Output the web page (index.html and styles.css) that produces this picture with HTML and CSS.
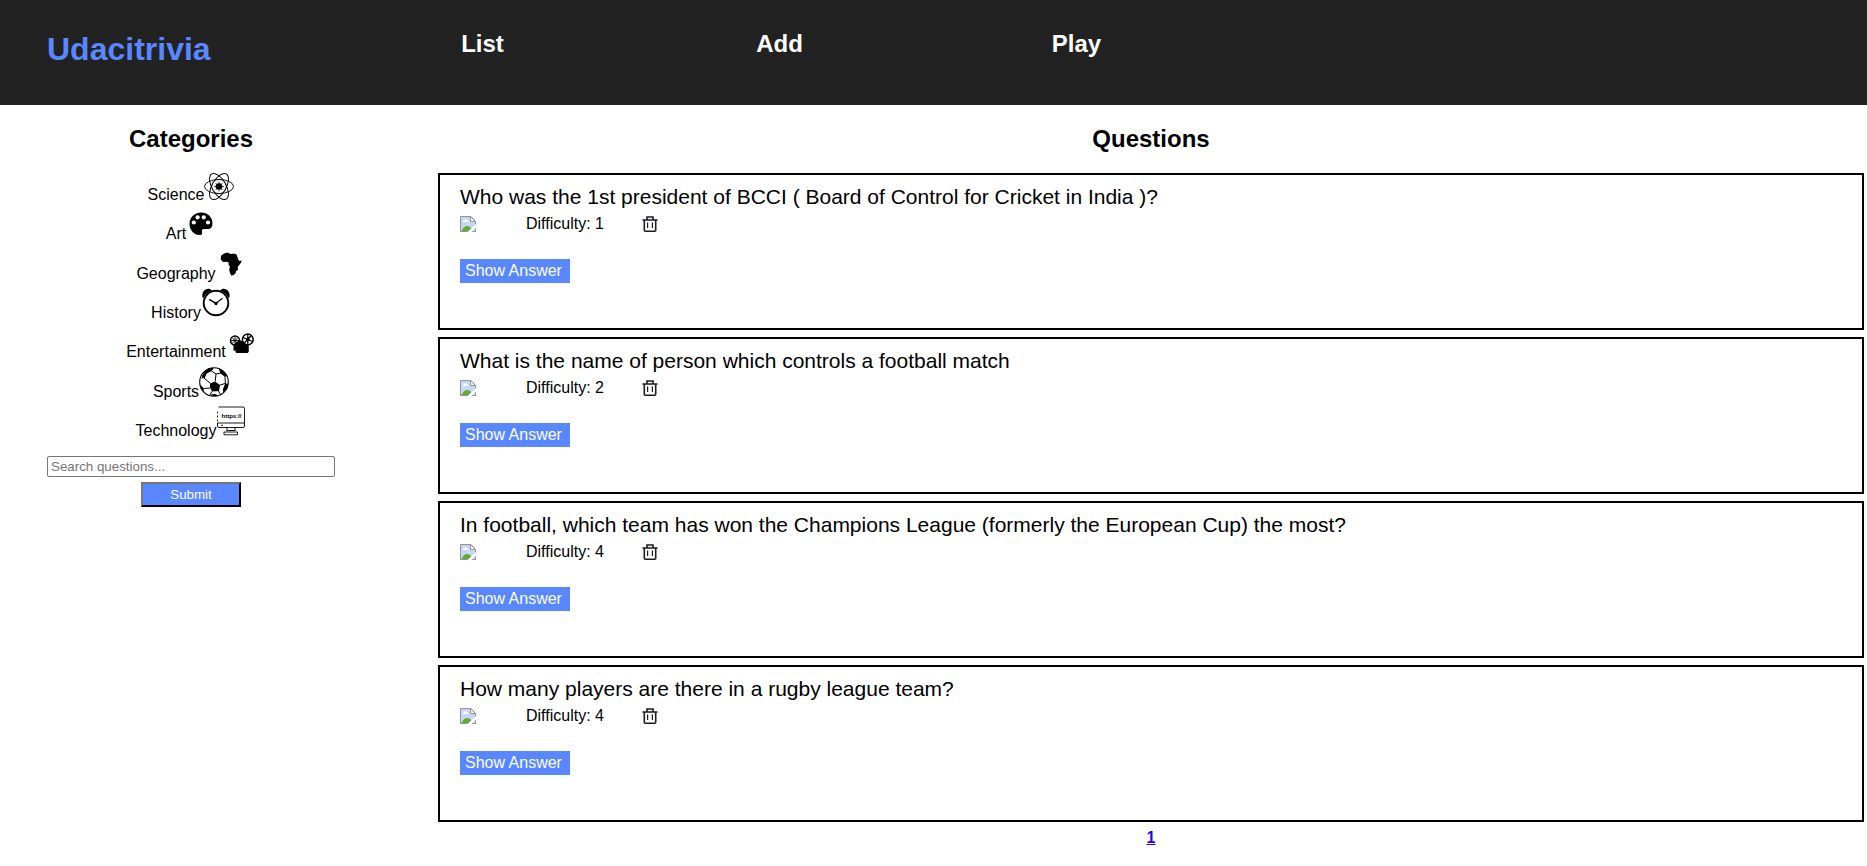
FILE: index.html
```
<!DOCTYPE html>
<html lang="en">
<head>
<meta charset="utf-8">
<title>Udacitrivia</title>
<link rel="stylesheet" href="styles.css">
</head>
<body>
<svg class="sprite" aria-hidden="true">
  <symbol id="broken" viewBox="0 0 16 16">
    <path d="M0 0h11l5 5v11H0z" fill="#fff"/>
    <path d="M1 1h9v5h5v9H1z" fill="#c8d6f8"/>
    <path d="M2.500 6a1.500 1.500 0 0 1 1.500-1.700 2 2 0 0 1 3.500 0A1 1 0 0 1 8 6z" fill="#fff"/>
    <path d="M1.500 15c1.500-3.500 3.500-5 5.500-5s3.500 1 4.500 2.500L9 15z" fill="#62ad35"/>
    <path d="M.5 16V.5h10.300l4.700 4.700V16M0 15.500h16" fill="none" stroke="#949494"/>
    <path d="M10.500.5v5h5z" fill="#fff" stroke="#949494"/>
    <path d="M16 8v3.500L11.500 16H7.500z" fill="#fff"/>
  </symbol>
  <symbol id="trash" viewBox="0 0 16 16">
    <path d="M.5 4h15M5 4V1h6v3M2.300 4v10.200q0 1 1 1h9.400q1 0 1-1V4" fill="none" stroke="#1c1c22" stroke-width="1.600"/>
    <path d="M5.600 6.500v5.500M10.400 6.500v5.500" stroke="#1c1c22" stroke-width="1.200"/>
  </symbol>
</svg>
<header class="header">
  <h1 class="logo">Udacitrivia</h1>
  <h2 class="nav-item">List</h2>
  <h2 class="nav-item">Add</h2>
  <h2 class="nav-item">Play</h2>
</header>
<main class="layout">
  <aside class="sidebar">
    <h2 class="title">Categories</h2>
    <ul class="categories">
      <li class="category">Science<svg class="category-icon" viewBox="0 0 30 30" fill="none" stroke="#000" stroke-width=".9"><ellipse cx="15" cy="16.500" rx="14.500" ry="7"/><ellipse cx="15" cy="16.500" rx="14.500" ry="7" transform="rotate(60 15 16.500)"/><ellipse cx="15" cy="16.500" rx="14.500" ry="7" transform="rotate(120 15 16.500)"/><circle cx="15" cy="16.500" r="7.300" stroke-width=".5"/><circle cx="15" cy="16.500" r="3.300" fill="#000" stroke="none"/><path d="M15 11.500v10M10 16.500h10M11.500 13l7 7M18.500 13l-7 7" stroke-width=".7"/></svg></li>
      <li class="category">Art<svg class="category-icon" viewBox="0 0 30 30"><path d="M15 3.500C8.500 3.500 3.500 8.500 3.500 15S8.500 26 13.500 26q3 0 2.600-2.600c-.7-2.600 0-3.400 2.400-3.400h3.500c3 0 4.500-2 4.500-5.500C26.500 8 21.500 3.500 15 3.500z"/><g fill="#fff"><circle cx="7.800" cy="13.500" r="2.100"/><circle cx="11.600" cy="8.300" r="2.100"/><circle cx="17.800" cy="8.300" r="2.100"/><circle cx="22" cy="13.500" r="2.100"/></g></svg></li>
      <li class="category">Geography<svg class="category-icon" viewBox="0 0 30 30"><path d="M8 4.500l4-1 1 1 3 .6 1-.5 3.500.6 1.600 5 1.400 1.700 2.200-.5-.7 2.300-3.200 4 .2 3-2 1.600-.4 2-2.500 2-2 .2-1.400-3.500-.5-3 .8-2-1.500-2.500.2-2-1.700-.8-4 .4-2.300-2.700.3-3.600z"/></svg></li>
      <li class="category">History<svg class="category-icon" viewBox="0 0 30 30"><path d="M1.500 9.500C.5 4 4 0 8.500.800l2.500 1.700C6 4.500 4 7 2.500 10zM28.500 9.500c1-5.500-2.500-9.500-7-8.700L19 2.500c5 2 7 4.500 8.500 7.500z"/><circle cx="15" cy="15" r="12.300" fill="#fff" stroke="#000" stroke-width="1.900"/><path d="M15 15.300l6.500-5" stroke="#000" stroke-width="1.100"/><path d="M15 15.300L8.200 11.300" stroke="#000" stroke-width="1.500"/><circle cx="15" cy="15.500" r="1.700"/></svg></li>
      <li class="category">Entertainment<svg class="category-icon" viewBox="0 0 30 30"><path d="M9.500 14h13v10.500q0 1.500-1.500 1.500H11q-1.500 0-1.500-1.500zM9.500 18v5L7.500 24v-7z"/><circle cx="9" cy="13.500" r="4.500" fill="#fff" stroke="#000" stroke-width="1.500"/><path d="M9 9v9M4.500 13.500h9M6 10.500l6 6M12 10.500l-6 6" stroke="#000" stroke-width=".9"/><circle cx="21.800" cy="12.500" r="5.400" fill="#fff" stroke="#000" stroke-width="1.500"/><path d="M21.800 7.500v10M17 10.500l9.500 4M18.300 16l7-7.500" stroke="#000" stroke-width="1.300"/><circle cx="21.800" cy="12.500" r="1.800"/><path d="M9 16l5-3 5 4 3.500 2v6H10z"/></svg></li>
      <li class="category">Sports<svg class="category-icon" viewBox="0 0 30 30"><circle cx="15" cy="15" r="14.300" fill="#fff" stroke="#000" stroke-width="1.100"/><path d="M11 16.500l5-2 5 3.500-1 6-7 .5-2-4zM10 1.200l5-.4-2.300 3.200-5 2.500-2 4.500-3.400.500C3.500 7 6 3 10 1.200zM19.500 1.200l4.500 2.200 4 5.600-2 1-4.500-3.500zM29.200 16.500l-1 5-4 4.500-.2-4 2-5zM.7 17l3.800 4 .5 4.500C2.300 23.500.9 21 .7 17zM10.500 27.500l6-.5 2.500 1.500q-4.500 1.500-8.500-1z"/><path d="M12.500 4l4.500 3 5-1M17 7l-.8 7.500M5 11l6.500 5.500M26 10l.5 7.500M21 18l5-1.500M19.500 24l2 3.500M11 21l-6.500.5M13 24.500l-2 3" fill="none" stroke="#000" stroke-width="1"/></svg></li>
      <li class="category">Technology<svg class="category-icon" viewBox="0 0 30 30" fill="none" stroke="#000" stroke-width=".9"><path d="M4 1h23q1.500 0 1.500 1.500v17.500q0 1.500-1.500 1.500H3q-1.500 0-1.500-1.500v-3M1.500 5.500v2M1.500 9.500v2M1.500 13.500v2M1.500 17h27M2.500 1H4M5 19.300h2"/><path d="M11 21.500v3M19 21.500v3M10.500 24.500h9M8 26h13.500v2.800H8z"/><text class="screen-text" x="15.500" y="11.500" text-anchor="middle" fill="#000" stroke="none">https://</text></svg></li>
    </ul>
    <form class="search">
      <input class="search-input" type="text" placeholder="Search questions..." aria-label="Search questions">
      <input class="search-submit" type="button" value="Submit">
    </form>
  </aside>
  <section class="questions">
    <h2 class="title">Questions</h2>
    <article class="card">
      <div class="question">Who was the 1st president of BCCI ( Board of Control for Cricket in India )?</div>
      <div class="status"><svg class="icon"><use href="#broken"/></svg><span class="difficulty">Difficulty: 1</span><button class="delete" type="button" aria-label="Delete"><svg class="icon"><use href="#trash"/></svg></button></div>
      <button class="show-answer" type="button">Show Answer</button>
    </article>
    <article class="card">
      <div class="question">What is the name of person which controls a football match</div>
      <div class="status"><svg class="icon"><use href="#broken"/></svg><span class="difficulty">Difficulty: 2</span><button class="delete" type="button" aria-label="Delete"><svg class="icon"><use href="#trash"/></svg></button></div>
      <button class="show-answer" type="button">Show Answer</button>
    </article>
    <article class="card">
      <div class="question">In football, which team has won the Champions League (formerly the European Cup) the most?</div>
      <div class="status"><svg class="icon"><use href="#broken"/></svg><span class="difficulty">Difficulty: 4</span><button class="delete" type="button" aria-label="Delete"><svg class="icon"><use href="#trash"/></svg></button></div>
      <button class="show-answer" type="button">Show Answer</button>
    </article>
    <article class="card">
      <div class="question">How many players are there in a rugby league team?</div>
      <div class="status"><svg class="icon"><use href="#broken"/></svg><span class="difficulty">Difficulty: 4</span><button class="delete" type="button" aria-label="Delete"><svg class="icon"><use href="#trash"/></svg></button></div>
      <button class="show-answer" type="button">Show Answer</button>
    </article>
    <nav class="pagination"><a class="page" href="#">1</a></nav>
  </section>
</main>
</body>
</html>
```
FILE: styles.css
```
* {
  box-sizing: border-box;
}

body {
  margin: 0;
  background: #fff;
  color: #000;
  font-family: "Liberation Sans", Arial, sans-serif;
  font-size: 16px;
}

.sprite {
  display: none;
}

.header {
  display: grid;
  grid-template-columns: 334px repeat(3, 297px);
  align-items: start;
  padding: 30px 0 37px;
  background: #222;
}

.logo {
  margin: 0;
  padding-left: 47px;
  color: #5887ff;
  font-size: 32px;
  line-height: 38px;
}

.nav-item {
  margin: 0;
  color: #fff;
  font-size: 24px;
  line-height: 28px;
  text-align: center;
  cursor: pointer;
}

.layout {
  display: grid;
  grid-template-columns: 382px 1fr;
  column-gap: 56px;
  padding-right: 3px;
}

.title {
  margin: 20px 0;
  font-size: 24px;
  line-height: 28px;
  text-align: center;
}

.sidebar {
  display: flex;
  flex-direction: column;
}

.categories {
  display: flex;
  flex-direction: column;
  justify-content: space-between;
  min-height: 270px;
  margin: -3px 0 0;
  padding: 0;
  list-style: none;
}

.category {
  display: flex;
  justify-content: center;
  align-items: baseline;
  height: 34px;
  line-height: 18px;
  cursor: pointer;
}

.category-icon {
  width: 30px;
  height: 30px;
}

.screen-text {
  font: bold 6px "Liberation Sans", Arial, sans-serif;
}

.search {
  display: flex;
  flex-direction: column;
  align-items: center;
  gap: 5px;
  margin: 16px 47px 0;
}

.search-input {
  width: 100%;
  height: 21px;
  padding: 1px 3px;
  border: 1px solid #767676;
  border-radius: 2px;
  font-family: "Liberation Sans", Arial, sans-serif;
}

.search-submit {
  width: 100px;
  height: 25px;
  padding: 0;
  border: 2px outset #222;
  background: #5887ff;
  color: #fff;
  font-family: "Liberation Sans", Arial, sans-serif;
}

.card {
  margin-bottom: 7px;
  padding: 10px 20px 45px;
  border: 2px solid #000;
}

.question {
  margin-bottom: 3px;
  font-size: 21px;
  line-height: 24px;
}

.status {
  display: flex;
  align-items: center;
  height: 24px;
  margin-bottom: 23px;
}

.icon {
  display: block;
  width: 16px;
  height: 16px;
}

.difficulty {
  margin: 0 38px 0 50px;
}

.delete {
  padding: 0;
  border: 0;
  background: none;
}

.show-answer {
  display: block;
  width: 110px;
  height: 24px;
  padding: 0 5px;
  border: 0;
  background: #5887ff;
  color: #fff;
  font: 16px "Liberation Sans", Arial, sans-serif;
  text-align: left;
}

.pagination {
  text-align: center;
}

.page {
  font-weight: bold;
  color: #20e;
}
```
